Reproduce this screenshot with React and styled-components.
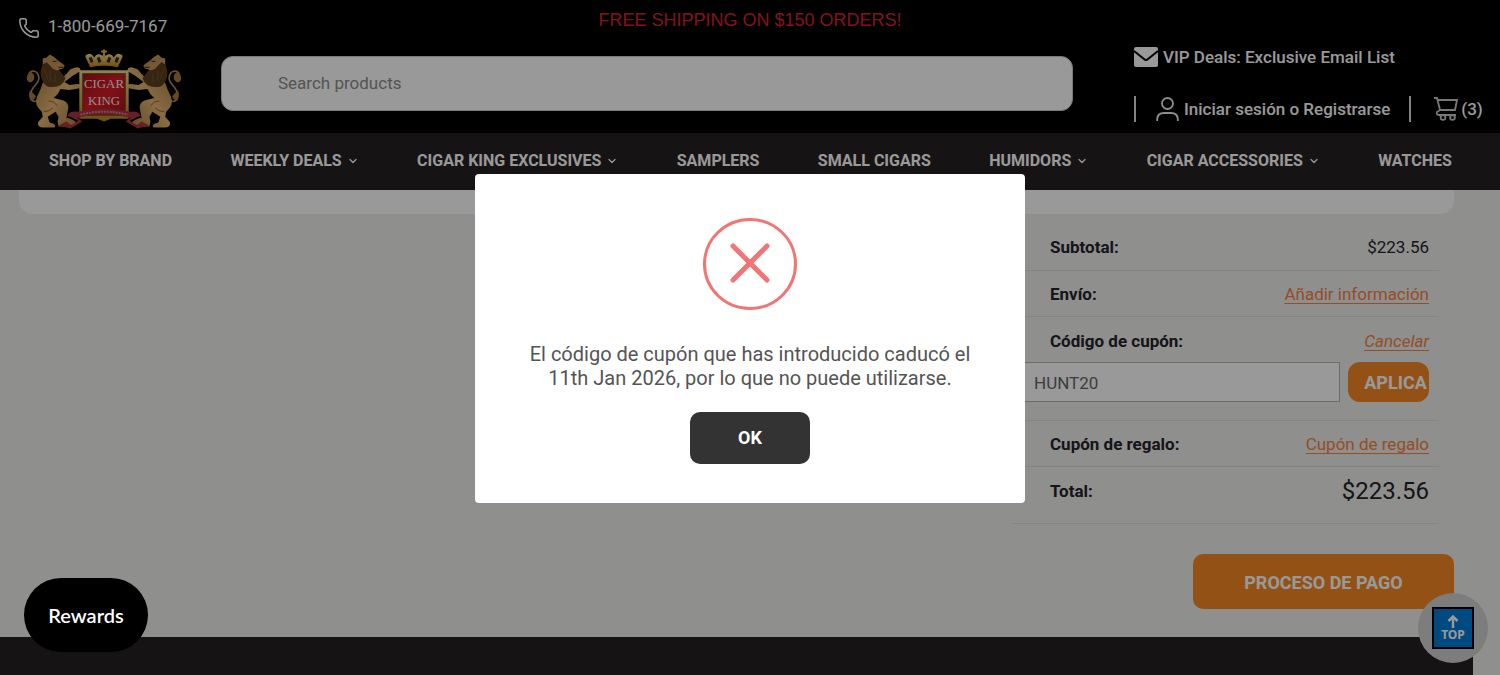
import React from "react";
import styled, { createGlobalStyle } from "styled-components";
import { Phone, ChevronDown } from "lucide-react";

const GlobalStyle = createGlobalStyle`
  * {
    box-sizing: border-box;
  }

  body {
    margin: 0;
    background-color: #eeeeeb;
    font-family: Roboto, "Liberation Sans", sans-serif;
    font-size: 16px;
    color: #25232a;
  }
`;

const Page = styled.div`
  min-height: 100vh;
  display: flex;
  flex-direction: column;
`;

/* Header */
const Header = styled.header`
  display: grid;
  grid-template-columns: 201px 1fr 427px;
  grid-template-rows: 44px auto;
  padding: 0 0 2px 20px;
  background-color: #000;
`;

const PhoneLink = styled.a`
  grid-area: 1 / 1;
  display: flex;
  align-items: center;
  gap: 8px;
  padding-top: 8px;
  color: #fff;
  font-size: 17px;
  text-decoration: none;

  svg {
    margin: 4px 0 0 -2px;
  }
`;

const Promo = styled.p`
  grid-area: 1 / 1 / 2 / 4;
  justify-self: center;
  margin: 0 20px 0 0;
  line-height: 40px;
  font-family: "Liberation Sans", Arial, sans-serif;
  font-size: 18px;
  color: #db2033;
`;

const LogoLink = styled.a`
  grid-area: 2 / 1;
  display: block;
  padding: 3px 0 0 5px;
  line-height: 0;
`;

const SearchForm = styled.form`
  grid-area: 2 / 2;
  padding-top: 12px;
`;

const SearchInput = styled.input`
  display: block;
  width: 100%;
  height: 55px;
  padding: 0 56px 2px;
  border: 1px solid #ccc;
  border-radius: 12px;
  background-color: #fff;
  font-family: inherit;
  font-size: 17px;

  &::placeholder {
    color: #8c8c8c;
    opacity: 1;
  }
`;

const HeaderLinks = styled.div`
  grid-area: 2 / 3;
  display: flex;
  flex-direction: column;
  gap: 26px;
  padding-left: 61px;
`;

const LinkRow = styled.div`
  display: flex;
  align-items: center;
  height: 26px;
`;

const HeaderLink = styled.a`
  display: flex;
  align-items: center;
  gap: ${(props) => props.$gap || 5}px;
  color: #fff;
  font-size: 17px;
  font-weight: 500;
  white-space: nowrap;
  text-decoration: none;
`;

const Divider = styled.span`
  flex: none;
  width: 2px;
  height: 26px;
  margin-right: 20px;
  background-color: #ddd;

  a + & {
    margin-left: 19px;
    margin-right: 23px;
  }
`;

const Nav = styled.nav`
  display: flex;
  align-items: center;
  justify-content: space-between;
  height: 57px;
  padding: 0 48px 0 49px;
  background-color: #252022;
`;

const NavLink = styled.a`
  display: flex;
  align-items: center;
  gap: 5px;
  padding-bottom: 3px;
  color: #fff;
  font-size: 16px;
  font-weight: 700;
  white-space: nowrap;
  text-decoration: none;

  svg {
    margin-top: 2px;
  }
`;

/* Cart */
const Main = styled.main`
  padding: 0 46px 28px 19px;
`;

const CartPanel = styled.div`
  height: 24px;
  border-radius: 0 0 14px 14px;
  background-color: #fff;
`;

const Summary = styled.section`
  width: 427px;
  margin: 10px 15px 0 auto;
`;

const SummaryRow = styled.div`
  display: flex;
  align-items: center;
  justify-content: space-between;
  min-height: ${(props) => props.$height || 46}px;
  padding: 0 10px ${(props) => props.$bottom || 0}px 38px;
  border-bottom: 1px solid #dcdcd8;
`;

const CouponRow = styled(SummaryRow)`
  flex-wrap: wrap;
  align-content: flex-start;
  padding-top: 14px;
  padding-bottom: 18px;
  line-height: 20px;
`;

const RowLabel = styled.span`
  font-size: 17px;
  font-weight: 700;
`;

const Amount = styled.span`
  font-size: ${(props) => (props.$large ? 24 : 17)}px;
`;

const OrangeLink = styled.a`
  color: #f58345;
  font-size: 17px;
  font-style: ${(props) => (props.$italic ? "italic" : "normal")};
  text-decoration: underline;
  text-decoration-skip-ink: none;
  text-underline-offset: 3px;
`;

const CouponForm = styled.form`
  display: flex;
  gap: 8px;
  flex: 0 0 407px;
  margin: 11px 0 0 -28px;
`;

const CouponInput = styled.input`
  flex: 1;
  min-width: 0;
  height: 40px;
  padding: 2px 11px 0;
  border: 1px solid #b4b4b4;
  background-color: #fff;
  color: #666;
  font-family: inherit;
  font-size: 17px;
`;

const OrangeButton = styled.button`
  border: none;
  background-color: #f58823;
  color: #fff;
  font-family: inherit;
  font-weight: 700;
  font-size: 18px;
  cursor: pointer;
`;

const ApplyButton = styled(OrangeButton)`
  width: 81px;
  padding: 1px 0 0 14px;
  border-radius: 12px;
  overflow: hidden;
`;

const CheckoutButton = styled(OrangeButton)`
  display: block;
  width: 261px;
  height: 55px;
  padding-top: 3px;
  margin: 30px 0 0 auto;
  border-radius: 10px;
`;

const Footer = styled.footer`
  flex: 1;
  min-height: 38px;
  margin-right: 27px;
  background-color: #252022;
`;

/* Floating widgets */
const RewardsButton = styled.button`
  position: fixed;
  left: 24px;
  bottom: 23px;
  z-index: 30;
  width: 124px;
  height: 74px;
  border: none;
  border-radius: 37px;
  background-color: #000;
  color: #fff;
  font-family: Lato, sans-serif;
  font-size: 20px;
  font-weight: 600;
  cursor: pointer;
`;

const TopButton = styled.a`
  position: fixed;
  right: 12px;
  bottom: 12px;
  display: flex;
  align-items: center;
  justify-content: center;
  width: 70px;
  height: 70px;
  border-radius: 50%;
  background-color: #d0d0d0;
  text-decoration: none;
`;

const TopBadge = styled.span`
  display: flex;
  flex-direction: column;
  align-items: center;
  justify-content: center;
  gap: 1px;
  width: 42px;
  height: 42px;
  border: 2px solid #000;
  background-color: #007bd8;
  color: #fff;
  font-family: "Noto Sans", sans-serif;
  font-size: 12px;
  font-weight: 700;
  line-height: 12px;
`;

/* Alert */
const Backdrop = styled.div`
  position: fixed;
  inset: 0;
  z-index: 20;
  display: flex;
  align-items: center;
  justify-content: center;
  padding-top: 2px;
  background-color: rgba(0, 0, 0, 0.4);
`;

const Modal = styled.div`
  display: flex;
  flex-direction: column;
  align-items: center;
  width: 550px;
  padding: 44px 40px 39px;
  border-radius: 4px;
  background-color: #fff;
`;

const ModalText = styled.p`
  max-width: 450px;
  margin: 32px 0 22px;
  color: #545454;
  font-size: 20px;
  line-height: 24px;
  text-align: center;
`;

const OkButton = styled.button`
  width: 120px;
  height: 52px;
  padding-bottom: 3px;
  border: none;
  border-radius: 10px;
  background-color: #333;
  color: #fff;
  font-family: inherit;
  font-size: 18px;
  font-weight: 700;
  cursor: pointer;
`;

const navItems = [
  { name: "SHOP BY BRAND" },
  { name: "WEEKLY DEALS", menu: true },
  { name: "CIGAR KING EXCLUSIVES", menu: true },
  { name: "SAMPLERS" },
  { name: "SMALL CIGARS" },
  { name: "HUMIDORS", menu: true },
  { name: "CIGAR ACCESSORIES", menu: true },
  { name: "WATCHES" },
];

function Lion() {
  return (
    <g>
      {/* tail */}
      <path d="M13 54 C5 57 4 48 7 43 C9 38 15 36 14 30 C13 23 6 22 4 27" fill="none" stroke="#b98b50" strokeWidth="1.6" />
      <path d="M5 24 Q1 28 2 33 Q5 38 9 33 Q11 27 5 24z M5 43 Q3 50 6 54 Q10 53 11 49z" fill="#a3783f" />
      {/* body and legs */}
      <path d="M19 33 Q16 43 12 50 Q9 58 17 65 L18 70 L13 76 Q13 81 18 81 H30 Q33 78 25 76 L23 70 L31 65 L34 70 L33 75 L34 80 H42 L52 77 Q51 73 42 71 L44 60 Q43 54 36 53 L29 51 Q34 47 36 42 L45 43 L57 41 Q58 37 53 37 L45 38 L40 35 L49 28 L56 24 Q57 20 52 20 L46 22 L38 31z" fill="url(#fur)" />
      {/* head and mane */}
      <path d="M18 18 L18 11 L22 10 L25 7 Q30 9 33 13 L40 18 Q40 22 35 22 L30 27 L18 30z" fill="#c4935a" />
      <path d="M18 17 Q14 25 17 32 Q20 41 28 40 Q38 40 41 31 L35 23 Q29 24 26 19 L22 15z" fill="#5d3c1d" />
      <path d="M20 22 l3 10 M25 24 l1 10 M31 27 l-1 8" stroke="#75502a" strokeWidth="1" />
      <path d="M28 14 h4 M34 20 h5" stroke="#3b220f" strokeWidth="1" />
      <path d="M24 54 Q29 54 33 59 M19 65 Q25 65 28 61" fill="none" stroke="#8e6432" strokeWidth="1" />
    </g>
  );
}

function Logo() {
  return (
    <svg width="158" height="84" viewBox="0 0 160 84" role="img" aria-label="Cigar King">
      <defs>
        <linearGradient id="fur" x1="0" y1="0" x2="1" y2="1">
          <stop offset="0" stopColor="#a87842" />
          <stop offset="0.5" stopColor="#e3b473" />
          <stop offset="1" stopColor="#a87842" />
        </linearGradient>
        <linearGradient id="gold" x1="0" y1="0" x2="0" y2="1">
          <stop offset="0" stopColor="#eed68f" />
          <stop offset="1" stopColor="#b88222" />
        </linearGradient>
        <linearGradient id="red" x1="0" y1="0" x2="1" y2="1">
          <stop offset="0" stopColor="#a90f17" />
          <stop offset="0.5" stopColor="#d81c26" />
          <stop offset="1" stopColor="#a90f17" />
        </linearGradient>
      </defs>
      <Lion />
      <g transform="translate(160 0) scale(-1 1)">
        <Lion />
      </g>
      {/* crown */}
      <path d="M66 20 L62 11 Q60 8 63 7 Q67 5 70 10 Q73 5 78 8 H82 Q87 5 90 10 Q93 5 97 7 Q100 8 98 11 L94 20 Q80 17 66 20z" fill="url(#gold)" />
      <path d="M80 2 v8 M77 4 h6" stroke="#dfb347" strokeWidth="2" />
      <path d="M66 10 l2 5 M74 10 l2 5 M86 10 l-2 5 M94 10 l-2 5" fill="none" stroke="#3a2608" strokeWidth="3" />
      {/* shield */}
      <path d="M55 23 H105 V72 H87 L80 75 L73 72 H55z" fill="url(#gold)" />
      <rect x="58" y="26" width="44" height="43" fill="#5d3f10" />
      <rect x="59" y="27" width="42" height="41" fill="url(#red)" />
      <text x="80" y="41" textAnchor="middle" fontFamily="Liberation Serif, serif" fontSize="13" fill="#eee">CIGAR</text>
      <text x="80" y="58" textAnchor="middle" fontFamily="Liberation Serif, serif" fontSize="13" fill="#eee">KING</text>
      {/* ribbon */}
      <path d="M34 79 L42 75 L47 79 L54 74 L43 69 Q45 64 53 65 Q80 59 107 65 Q115 64 117 69 L106 74 L113 79 L118 75 L126 79 L114 82 L102 75 L107 71 Q80 64 53 71 L58 75 L46 82z" fill="#a83440" />
      <path d="M56 68 Q80 62 104 68" fill="none" stroke="#d08088" strokeWidth="2" strokeDasharray="2 1" />
    </svg>
  );
}

function EnvelopeIcon() {
  return (
    <svg width="24" height="20" viewBox="0 0 24 20" aria-hidden="true">
      <rect width="24" height="20" rx="2" fill="#fff" />
      <path d="M0 4 L10 12 Q12 14 14 12 L24 4" fill="none" stroke="#000" strokeWidth="2" />
    </svg>
  );
}

function UserIcon() {
  return (
    <svg width="23" height="24" viewBox="0 0 23 24" fill="none" stroke="#eee" strokeWidth="1.8" aria-hidden="true">
      <circle cx="11.5" cy="6.5" r="5.5" />
      <path d="M1.2 24 V22 Q1.5 16 8 16 H15 Q21.5 16 21.8 22 V24" />
    </svg>
  );
}

function CartIcon() {
  return (
    <svg width="24" height="24" viewBox="0 0 24 24" fill="none" stroke="#c8c8c8" strokeWidth="1.8" aria-hidden="true">
      <path d="M0 1 H3 L6 13 H21 L23 3 H4" />
      <path d="M6 13 L3 15 Q2 18 5 18 H22" />
      <circle cx="9" cy="20.5" r="2.4" />
      <circle cx="18.5" cy="20.5" r="2.4" />
    </svg>
  );
}

function ErrorIcon() {
  return (
    <svg width="94" height="92" viewBox="0 0 94 92" fill="none" stroke="#f27474" aria-hidden="true">
      <ellipse cx="47" cy="46" rx="45.5" ry="44.5" strokeWidth="3" />
      <path d="M30 28 L64 62 M64 28 L30 62" strokeWidth="5" strokeLinecap="round" />
    </svg>
  );
}

export default function App() {
  return (
    <>
      <GlobalStyle />
      <Page>
        <Header>
          <PhoneLink href="tel:18006697167">
            <Phone size={22} strokeWidth={1.7} />
            1-800-669-7167
          </PhoneLink>
          <Promo>FREE SHIPPING ON $150 ORDERS!</Promo>
          <LogoLink href="#">
            <Logo />
          </LogoLink>
          <SearchForm role="search">
            <SearchInput type="text" placeholder="Search products" aria-label="Search products" />
          </SearchForm>
          <HeaderLinks>
            <LinkRow>
              <HeaderLink href="#">
                <EnvelopeIcon />
                VIP Deals: Exclusive Email List
              </HeaderLink>
            </LinkRow>
            <LinkRow>
              <Divider />
              <HeaderLink href="#">
                <UserIcon />
                Iniciar sesión o Registrarse
              </HeaderLink>
              <Divider />
              <HeaderLink href="#" $gap={3}>
                <CartIcon />
                (3)
              </HeaderLink>
            </LinkRow>
          </HeaderLinks>
        </Header>
        <Nav>
          {navItems.map((item) => (
            <NavLink key={item.name} href="#">
              {item.name}
              {item.menu && <ChevronDown size={12} strokeWidth={2.5} />}
            </NavLink>
          ))}
        </Nav>

        <Main>
          <CartPanel />
          <Summary>
            <SummaryRow $height={47}>
              <RowLabel>Subtotal:</RowLabel>
              <Amount>$223.56</Amount>
            </SummaryRow>
            <SummaryRow>
              <RowLabel>Envío:</RowLabel>
              <OrangeLink href="#">Añadir información</OrangeLink>
            </SummaryRow>
            <CouponRow $height={104}>
              <RowLabel as="label" htmlFor="coupon">Código de cupón:</RowLabel>
              <OrangeLink href="#" $italic>Cancelar</OrangeLink>
              <CouponForm>
                <CouponInput id="coupon" type="text" defaultValue="HUNT20" />
                <ApplyButton type="button">APLICA</ApplyButton>
              </CouponForm>
            </CouponRow>
            <SummaryRow>
              <RowLabel>Cupón de regalo:</RowLabel>
              <OrangeLink href="#">Cupón de regalo</OrangeLink>
            </SummaryRow>
            <SummaryRow $height={57} $bottom={8}>
              <RowLabel>Total:</RowLabel>
              <Amount $large>$223.56</Amount>
            </SummaryRow>
          </Summary>
          <CheckoutButton type="button">PROCESO DE PAGO</CheckoutButton>
        </Main>
        <Footer />
      </Page>

      <RewardsButton type="button">Rewards</RewardsButton>
      <TopButton href="#">
        <TopBadge>
          <svg width="12" height="13" viewBox="0 0 12 13" aria-hidden="true">
            <path d="M6 13 V2 M1.5 6 L6 1.5 L10.5 6" fill="none" stroke="#fff" strokeWidth="2.5" />
          </svg>
          TOP
        </TopBadge>
      </TopButton>

      <Backdrop>
        <Modal role="alertdialog" aria-modal="true" aria-describedby="alert-text">
          <ErrorIcon />
          <ModalText id="alert-text">
            El código de cupón que has introducido caducó el 11th Jan 2026, por lo que no puede utilizarse.
          </ModalText>
          <OkButton type="button">OK</OkButton>
        </Modal>
      </Backdrop>
    </>
  );
}
